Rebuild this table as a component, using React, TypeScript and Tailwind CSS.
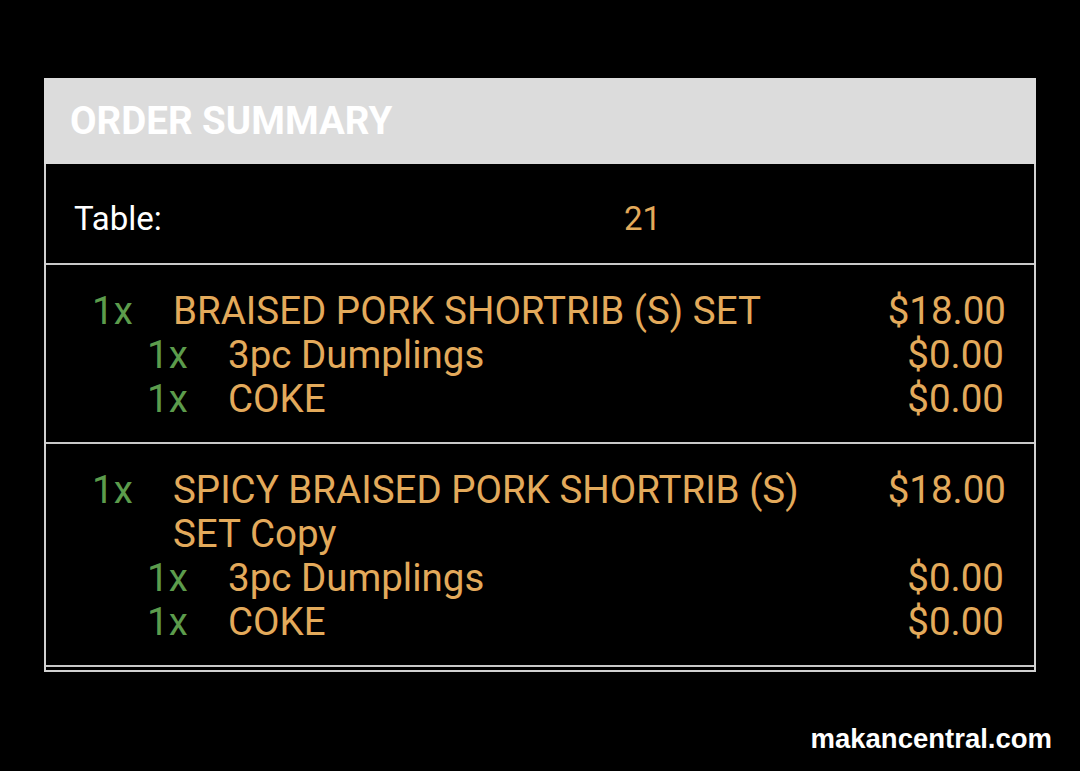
import React from 'react';

interface SubItem {
  qty: number;
  name: string;
  price: string;
}

interface OrderItem {
  qty: number;
  name: string;
  price: string;
  subs: SubItem[];
}

const items: OrderItem[] = [
  {
    qty: 1,
    name: 'BRAISED PORK SHORTRIB (S) SET',
    price: '$18.00',
    subs: [
      { qty: 1, name: '3pc Dumplings', price: '$0.00' },
      { qty: 1, name: 'COKE', price: '$0.00' },
    ],
  },
  {
    qty: 1,
    name: 'SPICY BRAISED PORK SHORTRIB (S) SET Copy',
    price: '$18.00',
    subs: [
      { qty: 1, name: '3pc Dumplings', price: '$0.00' },
      { qty: 1, name: 'COKE', price: '$0.00' },
    ],
  },
];

export default function App() {
  return (
    <div className="w-[1080px] h-[771px] bg-black flex flex-col font-['Roboto',sans-serif] overflow-hidden">
      <div className="pt-[78px] pl-[44px] w-[1036px]">
        <div className="border-2 border-[#d2d2d2]">
          {/* Header */}
          <div className="bg-[#dcdcdc] h-[86px] flex items-center pl-[26px] -mx-[2px] -mt-[2px]">
            <h1 className="text-[38.5px] font-bold text-white leading-none">ORDER SUMMARY</h1>
          </div>

          {/* Table row */}
          <div className="flex items-center h-[101px] border-b-2 border-[#c8c8c8] pl-[28px] pt-[10px]">
            <span className="text-[33px] text-white w-[550px]">Table:</span>
            <span className="text-[33px] text-[#e3aa5b]">21</span>
          </div>

          {/* Items */}
          {items.map((item, i) => (
            <div key={i} className="border-b-2 border-[#c8c8c8] pt-[24px] pb-[21px] pl-[46px] pr-[28px] text-[38.5px] leading-[44px]">
              <div className="flex">
                <span className="w-[81px] text-[#5c9c4c]">{item.qty}x</span>
                <span className="w-[680px] text-[#e3aa5b]">{item.name}</span>
                <span className="flex-1 text-right text-[#e3aa5b]">{item.price}</span>
              </div>
              {item.subs.map((sub, j) => (
                <div key={j} className="flex pl-[55px] pr-[2px]">
                  <span className="w-[81px] text-[#5c9c4c]">{sub.qty}x</span>
                  <span className="flex-1 text-[#e3aa5b]">{sub.name}</span>
                  <span className="text-right text-[#e3aa5b]">{sub.price}</span>
                </div>
              ))}
            </div>
          ))}
          <div className="h-[3px]" />
        </div>
      </div>

      {/* Watermark */}
      <div className="flex justify-end pr-[28px] mt-auto pb-[12px]">
        <span className="font-['Liberation_Sans',sans-serif] font-bold text-[27.5px] text-white">makancentral.com</span>
      </div>
    </div>
  );
}
